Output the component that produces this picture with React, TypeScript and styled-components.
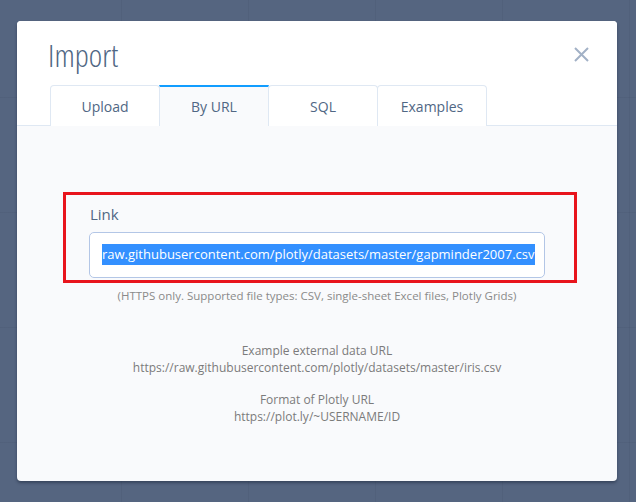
import React from "react";
import styled, { createGlobalStyle } from "styled-components";

const GlobalStyle = createGlobalStyle`
  html, body {
    margin: 0;
    padding: 0;
  }
  body {
    font-family: "Open Sans", "Noto Sans", sans-serif;
    background: #556580;
  }
`;

const Backdrop = styled.div`
  width: 636px;
  height: 502px;
  box-sizing: border-box;
  padding: 21px 0 0 17px;
  overflow: hidden;
  background-color: #556580;
  background-image: linear-gradient(
      to right,
      rgba(30, 40, 60, 0.07) 1px,
      transparent 1px
    ),
    linear-gradient(to bottom, rgba(30, 40, 60, 0.07) 1px, transparent 1px);
  background-size: 127px 100%, 100% 115px;
  background-position: -6px 0, 0 97px;
`;

const Modal = styled.div`
  width: 600px;
  height: 460px;
  border-radius: 4px;
  background: #f9fafc;
  box-shadow: 0 2px 3px rgba(20, 30, 50, 0.45);
  display: flex;
  flex-direction: column;
  overflow: hidden;
`;

const Header = styled.div`
  background: #fff;
  height: 105px;
  box-sizing: border-box;
  border-bottom: 1px solid #dfe8f3;
  display: flex;
  flex-direction: column;
  justify-content: flex-end;
`;

const TitleRow = styled.div`
  display: flex;
  justify-content: space-between;
  align-items: center;
  padding: 0 27px 0 31px;
  height: 64px;
`;

const Title = styled.h1`
  margin: 0;
  font-family: "Open Sans", sans-serif;
  font-stretch: 78%;
  font-weight: 300;
  font-size: 32px;
  line-height: 40px;
  color: #506784;
  padding-top: 3px;
`;

const Close = styled.button`
  border: 0;
  background: none;
  padding: 0;
  width: 18px;
  height: 18px;
  display: flex;
  align-items: center;
  justify-content: center;
  cursor: pointer;
  margin-top: 3px;
`;

const Tabs = styled.div`
  display: flex;
  padding-left: 33px;
  margin-bottom: -1px;
`;

const Tab = styled.div<{ $active?: boolean }>`
  width: 110px;
  height: 41px;
  box-sizing: border-box;
  margin-left: -1px;
  &:first-child {
    margin-left: 0;
  }
  display: flex;
  align-items: center;
  justify-content: center;
  font-size: 14px;
  color: #506784;
  border: 1px solid #dfe8f3;
  border-bottom: 0;
  border-top: ${(p) => (p.$active ? "2px solid #119dff" : "1px solid #dfe8f3")};
  border-radius: ${(p) => (p.$active ? "0" : "4px 4px 0 0")};
  background: ${(p) => (p.$active ? "#f9fafc" : "#fff")};
  padding-top: ${(p) => (p.$active ? "0" : "1px")};
  position: relative;
  z-index: ${(p) => (p.$active ? 1 : 0)};
`;

const Body = styled.div`
  flex: 1;
  display: flex;
  flex-direction: column;
  align-items: center;
  padding-top: 66px;
`;

const Highlight = styled.div`
  width: 514px;
  height: 91px;
  box-sizing: border-box;
  border: 3px solid #e8141c;
  margin-left: 6px;
  padding: 9px 29px 0 23px;
`;

const Label = styled.div`
  font-size: 15px;
  line-height: 20px;
  color: #506784;
  margin-left: 1px;
  margin-bottom: 8px;
`;

const Field = styled.div`
  height: 46px;
  box-sizing: border-box;
  border: 1px solid #b3c6e6;
  border-radius: 5px;
  background: #fff;
  display: flex;
  align-items: center;
  padding-left: 12px;
  padding-bottom: 2px;
  overflow: hidden;
  white-space: nowrap;
`;

const Selected = styled.span`
  background: #3390ff;
  color: #fff;
  font-size: 13px;
  line-height: 19px;
  padding: 1px 0;
`;

const Help = styled.div`
  margin-top: 6px;
  font-size: 11.5px;
  line-height: 14px;
  color: #8a8a8a;
`;

const Info = styled.div`
  margin-top: 39px;
  font-size: 12px;
  line-height: 17px;
  color: #7b7b7b;
  text-align: center;
  & + & {
    margin-top: 15px;
  }
`;

export default function App() {
  return (
    <>
      <GlobalStyle />
      <Backdrop>
        <Modal>
          <Header>
            <TitleRow>
              <Title>Import</Title>
              <Close aria-label="close">
                <svg width="15" height="15" viewBox="0 0 15 15">
                  <path
                    d="M1 1L14 14M14 1L1 14"
                    stroke="#a2b1c6"
                    strokeWidth="2"
                    fill="none"
                  />
                </svg>
              </Close>
            </TitleRow>
            <Tabs>
              <Tab>Upload</Tab>
              <Tab $active>By URL</Tab>
              <Tab>SQL</Tab>
              <Tab>Examples</Tab>
            </Tabs>
          </Header>
          <Body>
            <Highlight>
              <Label>Link</Label>
              <Field>
                <Selected>
                  raw.githubusercontent.com/plotly/datasets/master/gapminder2007.csv
                </Selected>
              </Field>
            </Highlight>
            <Help>
              (HTTPS only. Supported file types: CSV, single-sheet Excel files,
              Plotly Grids)
            </Help>
            <Info>
              Example external data URL
              <br />
              https://raw.githubusercontent.com/plotly/datasets/master/iris.csv
            </Info>
            <Info>
              Format of Plotly URL
              <br />
              https://plot.ly/~USERNAME/ID
            </Info>
          </Body>
        </Modal>
      </Backdrop>
    </>
  );
}
